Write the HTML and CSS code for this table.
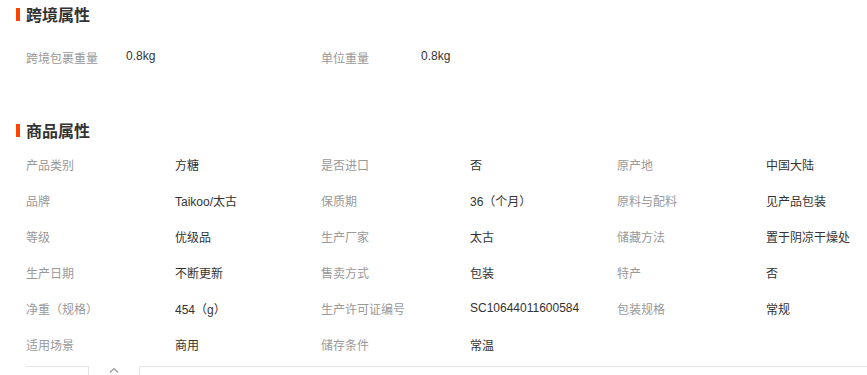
FILE: index.html
```html
<!DOCTYPE html>
<html lang="zh-CN">
<head>
<meta charset="utf-8">
<link rel="stylesheet" href="styles.css">
</head>
<body>
<div class="page">
  <div class="sec-title"><span class="bar"></span><span>跨境属性</span></div>
  <div class="cross-row">
    <div class="cross-cell"><span class="label w100">跨境包裹重量</span><span class="value">0.8kg</span></div>
    <div class="cross-cell"><span class="label w100">单位重量</span><span class="value">0.8kg</span></div>
  </div>

  <div class="sec-title second"><span class="bar"></span><span>商品属性</span></div>
  <div class="grid">
    <div class="cell"><span class="label">产品类别</span><span class="value">方糖</span></div>
    <div class="cell"><span class="label">是否进口</span><span class="value">否</span></div>
    <div class="cell"><span class="label">原产地</span><span class="value">中国大陆</span></div>

    <div class="cell"><span class="label">品牌</span><span class="value">Taikoo/太古</span></div>
    <div class="cell"><span class="label">保质期</span><span class="value">36（个月）</span></div>
    <div class="cell"><span class="label">原料与配料</span><span class="value">见产品包装</span></div>

    <div class="cell"><span class="label">等级</span><span class="value">优级品</span></div>
    <div class="cell"><span class="label">生产厂家</span><span class="value">太古</span></div>
    <div class="cell"><span class="label">储藏方法</span><span class="value">置于阴凉干燥处</span></div>

    <div class="cell"><span class="label">生产日期</span><span class="value">不断更新</span></div>
    <div class="cell"><span class="label">售卖方式</span><span class="value">包装</span></div>
    <div class="cell"><span class="label">特产</span><span class="value">否</span></div>

    <div class="cell"><span class="label">净重（规格）</span><span class="value">454（g）</span></div>
    <div class="cell"><span class="label">生产许可证编号</span><span class="value">SC10644011600584</span></div>
    <div class="cell"><span class="label">包装规格</span><span class="value">常规</span></div>

    <div class="cell"><span class="label">适用场景</span><span class="value">商用</span></div>
    <div class="cell"><span class="label">储存条件</span><span class="value">常温</span></div>
    <div class="cell"></div>
  </div>

  <div class="bottom">
    <div class="box-left"></div>
    <div class="caret"><svg width="10" height="6" viewBox="0 0 10 6"><path d="M1 5.5 L5 1.5 L9 5.5" fill="none" stroke="#999" stroke-width="1.2"/></svg></div>
    <div class="box-right"></div>
  </div>
</div>
</body>
</html>
```

FILE: styles.css
```css
html, body {
  margin: 0;
  padding: 0;
  background: #fff;
}
body {
  font-family: "Liberation Sans", "Noto Sans CJK SC", sans-serif;
  font-size: 12px;
  color: #333;
  overflow: hidden;
}
.page {
  width: 867px;
  height: 375px;
  overflow: hidden;
}
.sec-title {
  display: flex;
  align-items: center;
  height: 18px;
  margin-top: 5px;
  padding-left: 16px;
  font-size: 16px;
  font-weight: bold;
  color: #333;
}
.sec-title.second {
  margin-top: 46px;
}
.bar {
  display: inline-block;
  width: 4px;
  height: 13px;
  background: #ff4400;
  margin-right: 6px;
  margin-top: 1px;
}
.cross-row {
  display: flex;
  margin-top: 16px;
  padding-left: 26px;
  height: 36px;
  align-items: center;
}
.cross-cell {
  display: flex;
  width: 295px;
}
.label {
  color: #999;
  width: 149px;
  flex-shrink: 0;
}
.label.w100 {
  width: 100px;
}
.value {
  color: #333;
}
.grid {
  display: grid;
  grid-template-columns: 295px 296px 1fr;
  grid-auto-rows: 36px;
  margin-top: 7px;
  padding-left: 26px;
}
.cell {
  display: flex;
  align-items: center;
}
.bottom {
  display: flex;
  margin-top: 4px;
  padding-left: 26px;
  height: 20px;
}
.box-left {
  width: 62px;
  border-top: 1px solid #e5e5e5;
  border-right: 1px solid #e5e5e5;
}
.caret {
  width: 50px;
  display: flex;
  justify-content: center;
  padding-top: 1px;
}
.box-right {
  flex: 1;
  border-top: 1px solid #e5e5e5;
  border-left: 1px solid #e5e5e5;
}
```
